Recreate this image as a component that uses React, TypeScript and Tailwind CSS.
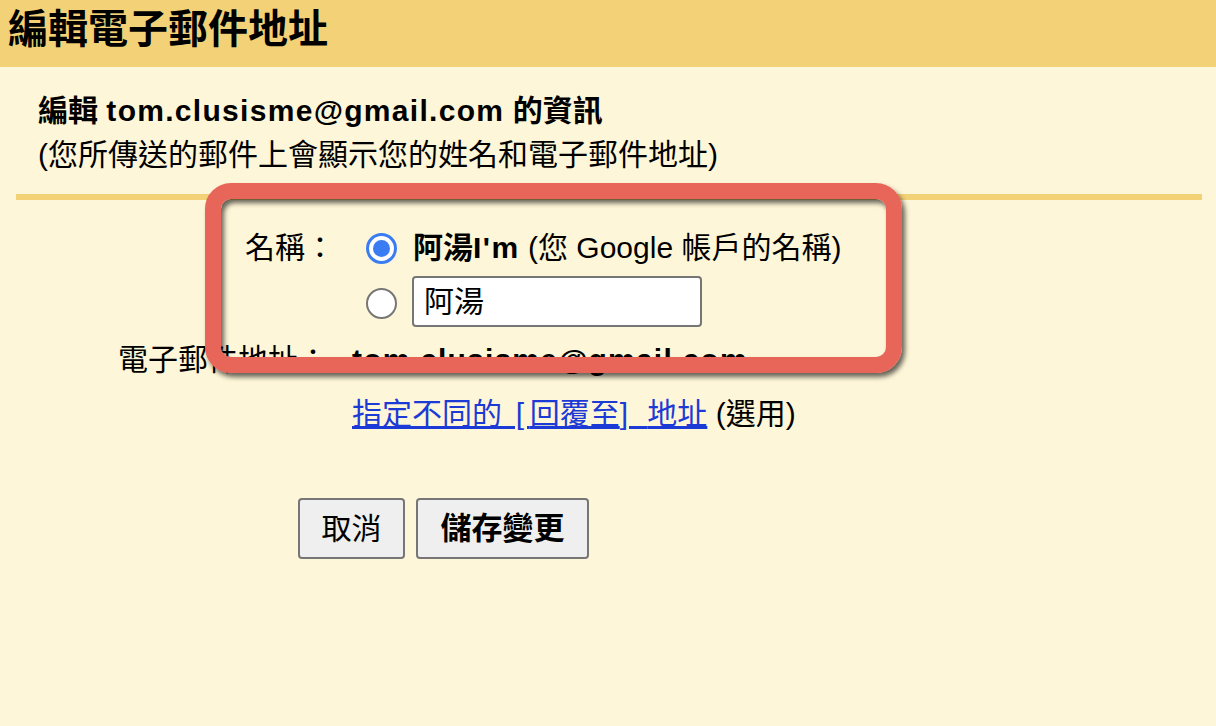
import React from "react";

const FONT = {
  fontFamily: '"Liberation Sans", "Noto Sans CJK TC", "Noto Sans CJK SC", sans-serif',
};

function Radio({ checked }: { checked: boolean }) {
  if (checked) {
    return (
      <div className="w-[31px] h-[31px] rounded-full border-[3px] border-[#3a7cf2] bg-white flex items-center justify-center shrink-0">
        <div className="w-[17px] h-[17px] rounded-full bg-[#3a7cf2]" />
      </div>
    );
  }
  return <div className="w-[31px] h-[31px] rounded-full border-2 border-[#767676] bg-white shrink-0" />;
}

export default function App() {
  return (
    <div className="relative w-full h-[726px] bg-[#fef6d8] overflow-hidden text-black" style={FONT}>
      <div className="h-[67px] bg-[#f2d177] pl-[8px] pt-[9px]">
        <div className="text-[40px] leading-[40px] font-bold">編輯電子郵件地址</div>
      </div>

      <div className="pl-[38px] mt-[22px] text-[30px] leading-[44px]">
        <div className="font-bold">
          編輯 <span className="tracking-[1.3px]">tom.clusisme@gmail.com</span> 的資訊
        </div>
        <div>(您所傳送的郵件上會顯示您的姓名和電子郵件地址)</div>
      </div>

      <div className="ml-[16px] mr-[14px] mt-[17px] h-[6px] bg-[#f2d177]" />

      <div className="text-[30px] leading-[44px]">
        <div className="flex mt-[26px]">
          <div className="w-[340px] text-right pr-[5px] shrink-0">名稱：</div>
          <div className="pl-[26px] flex flex-col">
            <div className="flex items-center h-[44px] gap-[16px]">
              <Radio checked />
              <div>
                <span className="font-bold">
                  阿湯<span className="tracking-[1.5px]">I'm</span>
                </span>{" "}
                (您 Google 帳戶的名稱)
              </div>
            </div>
            <div className="flex items-center mt-[6px] gap-[15px]">
              <div className="mt-[4px]">
                <Radio checked={false} />
              </div>
              <div className="w-[290px] h-[51px] bg-white border-2 border-[#767676] rounded-[4px] pl-[10px] flex items-center">
                阿湯
              </div>
            </div>
          </div>
        </div>

        <div className="flex mt-[11px]">
          <div className="w-[340px] text-right shrink-0 pr-[12px]">電子郵件地址：</div>
          <div className="pl-[12px] font-bold tracking-[1.2px]">tom.clusisme@gmail.com</div>
        </div>

        <div className="flex mt-[10px]">
          <div className="w-[352px] shrink-0" />
          <div>
            <a href="#" className="text-[#1c3ad6] underline">
              指定不同的<span className="tracking-[5.5px]"> [</span>回覆至<span className="tracking-[5.5px]">] </span>地址
            </a>{" "}
            (選用)
          </div>
        </div>

        <div className="flex mt-[62px] pl-[298px] gap-[11px]">
          <button className="w-[107px] h-[61px] bg-[#efefef] border-2 border-[#767676] rounded-[4px] text-[30px]" style={FONT}>
            取消
          </button>
          <button className="w-[173px] h-[61px] bg-[#efefef] border-2 border-[#767676] rounded-[4px] text-[31px] font-bold" style={FONT}>
            儲存變更
          </button>
        </div>
      </div>

      <div className="absolute left-[205px] top-[183px] w-[697px] h-[190px] rounded-[26px] border-[16px] border-[#e8655a] shadow-[3px_4px_5px_rgba(0,0,0,0.6),inset_3px_4px_5px_rgba(0,0,0,0.6)] pointer-events-none" />
    </div>
  );
}
